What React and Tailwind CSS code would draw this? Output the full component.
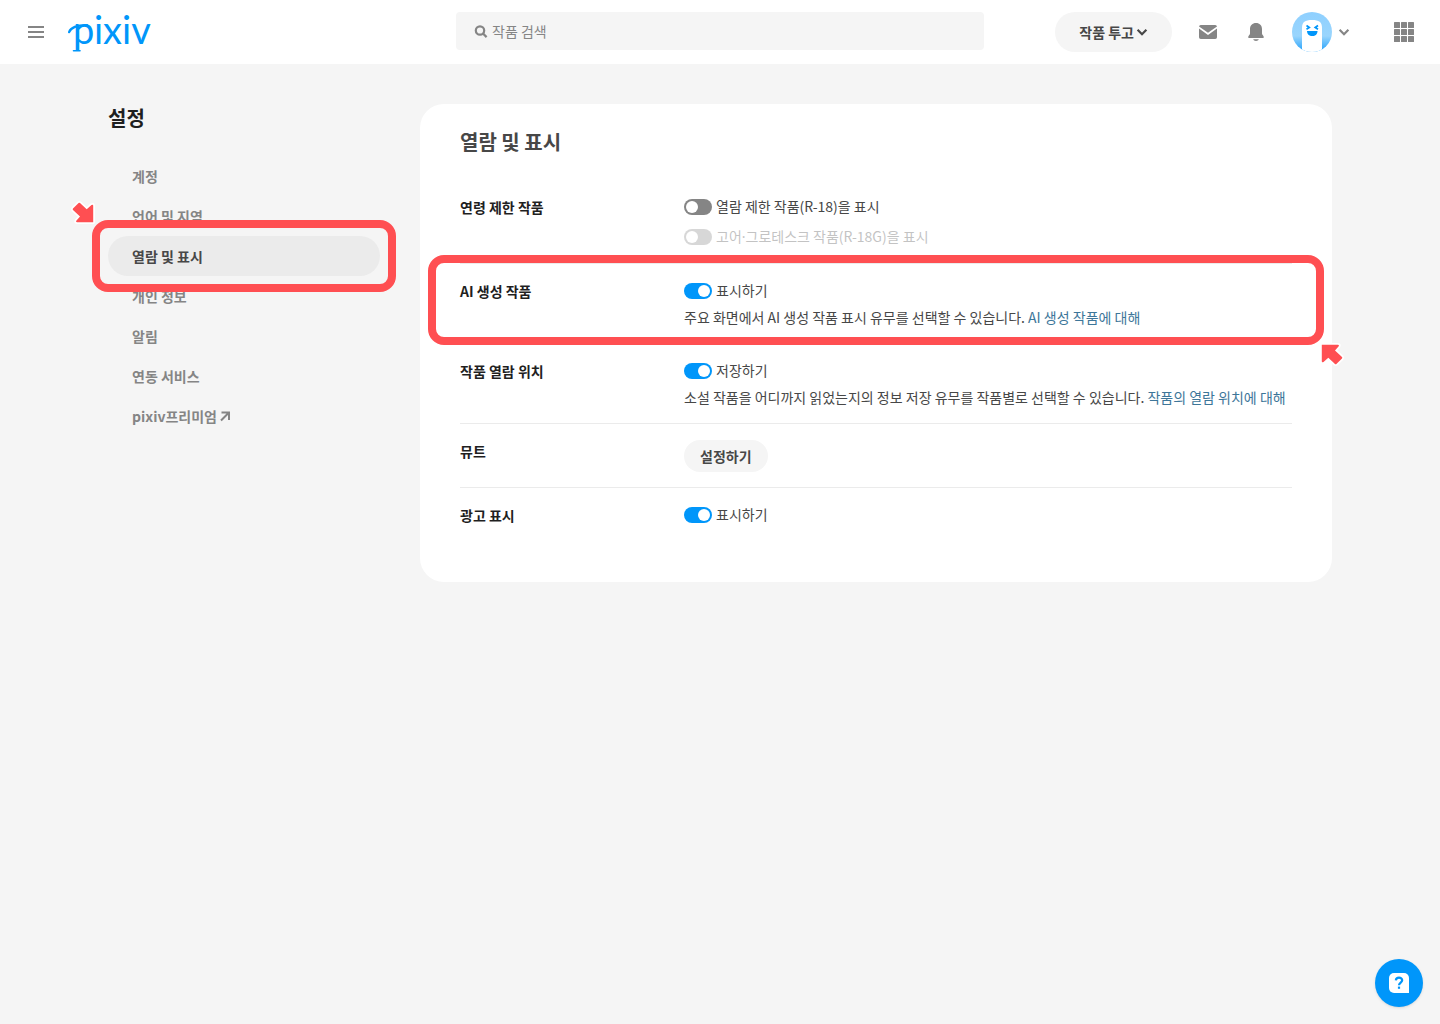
import React, { useState } from 'react';

const menu = [
  { name: '계정' },
  { name: '언어 및 지역' },
  { name: '열람 및 표시', active: true },
  { name: '개인 정보' },
  { name: '알림' },
  { name: '연동 서비스' },
  { name: 'pixiv프리미엄', external: true },
];

function Logo() {
  return (
    <svg width="88" height="56" viewBox="68 4 88 56" role="img" aria-label="pixiv">
      <g className="fill-[#0096fa] font-['Lato',sans-serif]">
        <text x="73" y="44" fontSize="38">p</text>
        <text x="94" y="44" fontSize="38">ixiv</text>
      </g>
      <g fill="none" stroke="#0096fa" strokeLinecap="round">
        <path d="M69.200 32C70.500 28 77 24.800 87 25.200" strokeWidth="2.400" />
        <path d="M73.500 50.800h6.500" strokeWidth="1.600" />
      </g>
    </svg>
  );
}

function Chevron({ className }) {
  return (
    <svg viewBox="0 0 12 12" className={className} fill="none" stroke="currentColor" strokeWidth="2.2" aria-hidden="true">
      <path d="M1.6 3.8 6 8.2l4.4-4.4" />
    </svg>
  );
}

function Header() {
  return (
    <header className="grid h-16 grid-cols-[1fr_minmax(200px,528px)_1fr] items-center bg-white px-6">
      <div className="flex items-center gap-5">
        <button type="button" aria-label="메뉴" className="flex size-6 items-center justify-center text-[#858585]">
          <svg width="16" height="12" viewBox="0 0 16 12" fill="currentColor">
            <path d="M0 0h16v2H0zM0 5h16v2H0zM0 10h16v2H0z" />
          </svg>
        </button>
        <a href="#home"><Logo /></a>
      </div>
      <label className="mb-0.5 flex h-[38px] items-center gap-1 rounded bg-[#f5f5f5] px-[18px]">
        <svg width="14" height="14" viewBox="0 0 14 14" fill="none" stroke="#858585" strokeWidth="2.2" aria-hidden="true">
          <circle cx="6" cy="6.5" r="4.2" />
          <path d="m9 9.500 3.600 3.600" />
        </svg>
        <input
          type="text"
          aria-label="작품 검색"
          placeholder="작품 검색"
          className="min-w-0 flex-1 bg-transparent text-sm text-[#474747] outline-none placeholder:text-[#858585]"
        />
      </label>
      <div className="flex items-center justify-end gap-6 text-[#858585]">
        <button type="button" className="flex h-10 items-center gap-0.5 rounded-full bg-[#f5f5f5] px-6 text-sm font-bold whitespace-nowrap text-[#474747]">
          작품 투고
          <Chevron className="size-3" />
        </button>
        <button type="button" aria-label="메시지">
          <svg width="24" height="24" viewBox="0 0 24 24" fill="currentColor">
            <path d="M4.800 5h14.400A1.800 1.800 0 0 1 21 6.600L12 12.800 3 6.600A1.800 1.800 0 0 1 4.800 5z" />
            <path d="M3 8.600 12 14.900l9-6.300v8.600a1.800 1.800 0 0 1-1.800 1.800H4.800A1.800 1.800 0 0 1 3 17.200z" />
          </svg>
        </button>
        <button type="button" aria-label="알림">
          <svg width="24" height="24" viewBox="0 0 24 24" fill="currentColor">
            <path d="M12 3c3.600 0 6 2.500 6 6v4.500c0 1.500 1.800 2.300 1.800 3.500 0 .6-.4 1-1 1H5.200c-.6 0-1-.4-1-1C4.200 15.800 6 15 6 13.500V9c0-3.500 2.400-6 6-6z" />
            <path d="M9.200 19.300h5.600c-.4 1-1.400 1.700-2.800 1.700s-2.400-.7-2.800-1.700z" />
          </svg>
        </button>
        <button type="button" aria-label="프로필" className="flex items-center gap-1.5">
          <svg width="40" height="40" viewBox="0 0 40 40">
            <defs>
              <linearGradient id="sky" x1="0" y1="0" x2="0" y2="1">
                <stop offset="0" stopColor="#8fd0ff" />
                <stop offset="0.6" stopColor="#99d5fd" />
                <stop offset="1" stopColor="#1f9ffa" />
              </linearGradient>
              <clipPath id="round"><circle cx="20" cy="20" r="20" /></clipPath>
            </defs>
            <g clipPath="url(#round)">
              <path d="M0 0h40v40H0z" fill="url(#sky)" />
              <path d="M10 41V16c0-6 3-8 10-8s10 2 10 8v25z" fill="#fff" />
              <path d="M15 19h10.500c0 3-2 5-5.200 5s-5.300-2-5.300-5z" fill="#0096fa" />
              <path d="m14.500 13.500 2.800 2-2.800 1.800M26 13.500l-2.800 2 2.800 1.800" fill="none" stroke="#0096fa" strokeWidth="1.700" />
            </g>
          </svg>
          <Chevron className="size-3" />
        </button>
        <button type="button" aria-label="서비스" className="ml-[18px] flex size-6 items-center justify-center">
          <svg width="20" height="20" viewBox="0 0 20 20" fill="currentColor">
            {[0, 7, 14].map((y) => [0, 7, 14].map((x) => (
              <rect key={`${x}-${y}`} x={x} y={y} width="6" height="6" rx="0.5" />
            )))}
          </svg>
        </button>
      </div>
    </header>
  );
}

// Red marker arrow, points to the bottom right by default
function Pointer({ className }) {
  return (
    <svg width="26" height="26" viewBox="0 0 26 26" className={className} aria-hidden="true">
      <path
        d="M8.600 3Q9.300 2.400 10 3L16.700 9.200 21.500 5q1.700-1 1.700.8V22.200H7Q5.400 22 6.300 20.700L10 16.500 3 10Q2.400 9.300 3 8.600z"
        fill="#ff4f52"
        stroke="#fff"
        strokeWidth="3.500"
        strokeLinejoin="round"
        paintOrder="stroke"
      />
    </svg>
  );
}

function Sidebar() {
  return (
    <nav className="w-[272px] shrink-0">
      <h1 className="text-xl leading-7 font-bold text-[#1f1f1f]">설정</h1>
      <ul className="mt-6">
        {menu.map((item) => (
          <li key={item.name} className="relative">
            <a
              href="#settings"
              className={
                item.active
                  ? 'flex h-10 items-center rounded-full bg-[#ebebeb] px-6 text-sm leading-[22px] font-bold text-[#474747]'
                  : 'flex h-10 items-center gap-0.5 rounded-full px-6 text-sm leading-[22px] font-bold text-[#858585]'
              }
            >
              {item.name}
              {item.external && (
                <svg width="12" height="12" viewBox="0 0 12 12" fill="none" stroke="currentColor" strokeWidth="2" aria-hidden="true">
                  <path d="M2.500 2.500h7.500V10M10 2.500 2 10.500" />
                </svg>
              )}
            </a>
            {item.active && (
              <>
                <div className="pointer-events-none absolute -inset-4 z-10 rounded-2xl border-8 border-[#ff4f52]" />
                <Pointer className="absolute -top-9 -left-[38px]" />
              </>
            )}
          </li>
        ))}
      </ul>
    </nav>
  );
}

function Toggle({ children, on, disabled }) {
  const [checked, setChecked] = useState(!!on);
  return (
    <label className={disabled ? 'flex items-center gap-1 opacity-32' : 'flex items-center gap-1'}>
      <input
        type="checkbox"
        checked={checked}
        disabled={disabled}
        onChange={(e) => setChecked(e.target.checked)}
        className="h-4 w-7 shrink-0 appearance-none rounded-full bg-[#858585] p-0.5 before:block before:size-3 before:rounded-full before:bg-white checked:bg-[#0096fa] checked:before:ml-3"
      />
      <span className="pb-0.5 leading-5">{children}</span>
    </label>
  );
}

function Row({ title, children, marked }) {
  return (
    <section className="relative flex border-b border-[#ebebeb] pt-4 pb-[15px] last:border-b-0 last:pb-4">
      <h3 className="w-56 shrink-0 font-bold text-[#1f1f1f]">{title}</h3>
      <div className="min-w-0 flex-1 text-[#474747]">{children}</div>
      {marked && (
        <>
          <div className="pointer-events-none absolute -inset-x-8 -top-[9px] -bottom-0.5 z-10 rounded-2xl border-8 border-[#ff4f52]" />
          <Pointer className="absolute -right-[53px] -bottom-6 rotate-180" />
        </>
      )}
    </section>
  );
}

export default function App() {
  return (
    <div className="min-h-screen bg-[#f5f5f5] font-['Noto_Sans_CJK_KR',sans-serif] text-sm">
      <Header />
      <div className="mx-auto flex max-w-[1224px] items-start gap-10 py-10">
        <Sidebar />
        <main className="min-w-0 flex-1 rounded-3xl bg-white px-10 pt-6 pb-10 leading-[22px]">
          <h2 className="mb-6 text-xl leading-7 font-bold text-[#474747]">열람 및 표시</h2>
          <Row title="연령 제한 작품">
            <div className="flex flex-col gap-2">
              <Toggle>열람 제한 작품(R-18)을 표시</Toggle>
              <Toggle disabled>
                고어<span className="font-['Noto_Sans',sans-serif] leading-none">·</span>그로테스크 작품(R-18G)을 표시
              </Toggle>
            </div>
          </Row>
          <Row title="AI 생성 작품" marked>
            <Toggle on>표시하기</Toggle>
            <p className="mt-1">
              주요 화면에서 AI 생성 작품 표시 유무를 선택할 수 있습니다.{' '}
              <a href="#ai" className="text-[#3d7699]">AI 생성 작품에 대해</a>
            </p>
          </Row>
          <Row title="작품 열람 위치">
            <Toggle on>저장하기</Toggle>
            <p className="mt-1">
              소설 작품을 어디까지 읽었는지의 정보 저장 유무를 작품별로 선택할 수 있습니다.{' '}
              <a href="#position" className="text-[#3d7699]">작품의 열람 위치에 대해</a>
            </p>
          </Row>
          <Row title="뮤트">
            <button type="button" className="h-8 rounded-full bg-[#f5f5f5] px-4 font-bold">설정하기</button>
          </Row>
          <Row title="광고 표시">
            <Toggle on>표시하기</Toggle>
          </Row>
        </main>
      </div>
      <button
        type="button"
        aria-label="도움말"
        className="fixed right-[17px] bottom-[17px] flex size-12 items-center justify-center rounded-full bg-[#0096fa] shadow-sm"
      >
        <svg width="20" height="20" viewBox="0 0 20 20">
          <path d="M5 0h10a5 5 0 0 1 5 5v15H5a5 5 0 0 1-5-5V5a5 5 0 0 1 5-5z" fill="#fff" />
          <path d="M6.800 7.400c.2-1.800 1.500-2.800 3.200-2.800s3.200 1 3.200 2.700c0 2.200-3.200 2.300-3.200 4.900" fill="none" stroke="#0096fa" strokeWidth="2.200" />
          <rect x="8.900" y="13.600" width="2.200" height="2.200" fill="#0096fa" />
        </svg>
      </button>
    </div>
  );
}
